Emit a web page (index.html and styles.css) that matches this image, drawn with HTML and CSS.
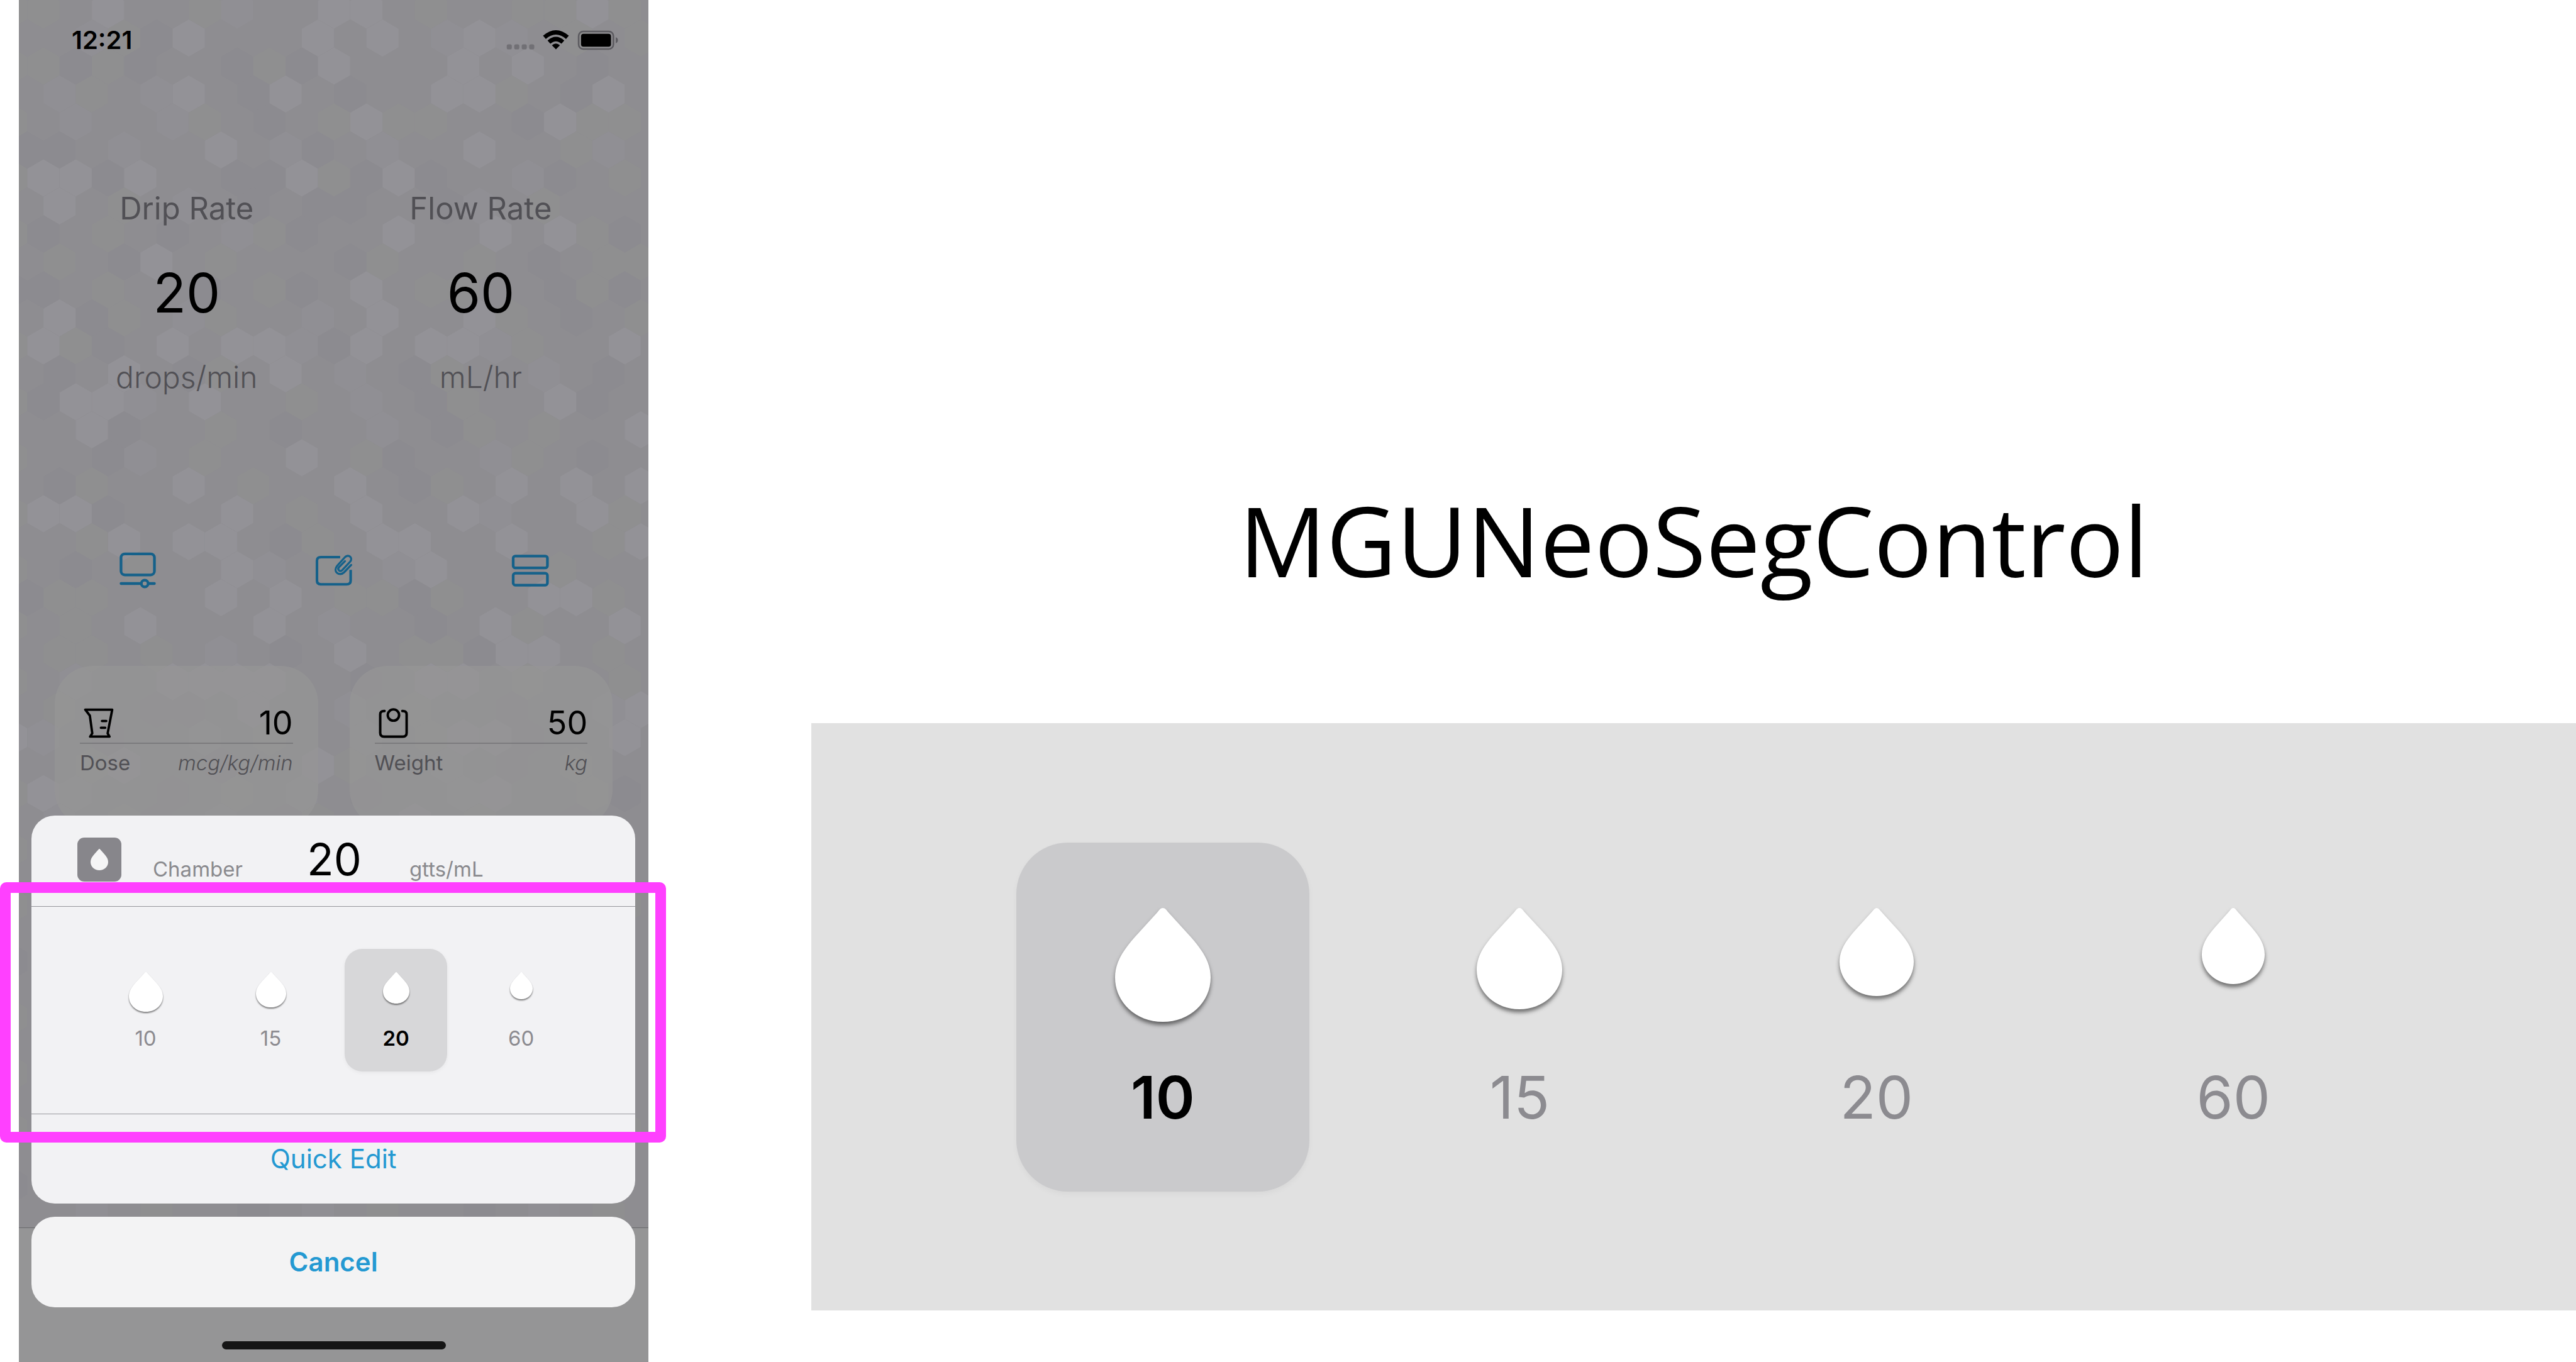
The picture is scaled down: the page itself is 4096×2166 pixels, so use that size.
FILE: index.html
```html
<!DOCTYPE html>
<html lang="en">
<head>
<meta charset="utf-8">
<title>MGUNeoSegControl</title>
<link rel="stylesheet" href="styles.css">
</head>
<body>
<svg class="symbols" aria-hidden="true">
  <symbol id="drop" viewBox="0 0 84 100" preserveAspectRatio="none">
    <path d="M42 0C44 0 45 1.500 47 4L67 26C77 37.500 84 48 84 61C84 83 65.500 100 42 100C18.500 100 0 83 0 61C0 48 7 37.500 17 26L37 4C39 1.500 40 0 42 0Z"/>
  </symbol>
</svg>
<main class="stage">
  <section class="device" aria-label="Infusion calculator">
    <div class="phone">
      <svg class="honeycomb" id="honeycomb" aria-hidden="true"></svg>
      <header class="status">
        <span class="clock">12:21</span>
        <svg class="indicators" viewBox="942 54 210 40" role="img" aria-label="Wi-Fi and battery">
          <g fill="#717075">
            <rect x="942" y="81.500" width="9.500" height="9.500" rx="3"/>
            <rect x="956" y="81.500" width="9.500" height="9.500" rx="3"/>
            <rect x="970" y="81.500" width="9.500" height="9.500" rx="3"/>
            <rect x="984" y="81.500" width="9.500" height="9.500" rx="3"/>
          </g>
          <g fill="none" stroke="#000" stroke-width="8">
            <path d="M1012.500 68.500Q1034 50 1055.500 68.500"/>
            <path d="M1021 77.500Q1034 66 1047 77.500"/>
          </g>
          <path d="M1034 91L1026.500 83.500Q1034 77 1041.500 83.500Z"/>
          <rect x="1076.500" y="57.500" width="65" height="33" rx="8.500" fill="none" stroke="#5c5b60" stroke-width="3"/>
          <rect x="1081" y="62" width="56" height="24" rx="4.500"/>
          <path d="M1146 68.500Q1150 70 1150 74T1146 79.500Z" fill="#5c5b60"/>
        </svg>
      </header>

      <div class="readings">
        <dl class="reading">
          <dt>Drip Rate</dt>
          <dd class="reading-value">20</dd>
          <dd class="reading-unit">drops/min</dd>
        </dl>
        <dl class="reading">
          <dt>Flow Rate</dt>
          <dd class="reading-value">60</dd>
          <dd class="reading-unit">mL/hr</dd>
        </dl>
      </div>

      <nav class="actions">
        <button type="button" aria-label="Display">
          <svg viewBox="0 0 70 70"><g fill="none" stroke="currentColor" stroke-width="5">
            <rect x="4" y="4.500" width="62" height="39" rx="7"/>
            <path d="M4 59.500H41M56 59.500H66" stroke-linecap="round"/>
            <circle cx="48" cy="59.500" r="6.300"/></g></svg>
        </button>
        <button type="button" aria-label="Notes">
          <svg viewBox="0 0 70 70"><g fill="none" stroke="currentColor" stroke-width="4.800">
            <path d="M46.500 10.500H11Q3.500 10.500 3.500 17V54Q3.500 61 11 61H58.500Q66 61 66 54V34"/>
            <path stroke-width="3.800" stroke-linecap="round" d="M67 25L54 38.500C45 47.500 32 37 41 26.500L55.500 10.500C62 4 71 12 65 19L50.500 34.500C46 39 40.500 33.500 44.500 29L55.500 18"/></g></svg>
        </button>
        <button type="button" aria-label="Rows">
          <svg viewBox="0 0 70 70"><g fill="none" stroke="currentColor" stroke-width="5">
            <rect x="3.500" y="8.500" width="63.500" height="22" rx="4"/>
            <rect x="3.500" y="40.500" width="63.500" height="22" rx="4"/></g></svg>
        </button>
      </nav>

      <div class="cards">
        <article class="card">
          <div class="card-main">
            <svg viewBox="0 0 56 56" aria-hidden="true"><g fill="none" stroke="#000" stroke-width="4.400" stroke-linejoin="round" stroke-linecap="round">
              <path d="M3 3H53L44.500 47L48 53H12L16 47L11.500 14Z"/>
              <path d="M34 24H42M32 36.500H40"/></g></svg>
            <span>10</span>
          </div>
          <div class="card-note"><span>Dose</span><em>mcg/kg/min</em></div>
        </article>
        <article class="card">
          <div class="card-main">
            <svg viewBox="0 0 56 56" aria-hidden="true"><g fill="none" stroke="#000" stroke-width="4.600" stroke-linecap="round">
              <path d="M11 5.500Q3 5 3 12V46Q3 53 10 53H45Q52 53 52 46V12Q52 5 44 5.500"/>
              <circle cx="27.500" cy="13" r="10.500"/></g></svg>
            <span>50</span>
          </div>
          <div class="card-note"><span>Weight</span><em>kg</em></div>
        </article>
      </div>
      <div class="toolbar"></div>

      <div class="sheet-stack">
        <div class="sheet">
          <div class="sheet-head">
            <span class="badge"><svg aria-hidden="true"><use href="#drop"/></svg></span>
            <span class="head-label">Chamber</span>
            <span class="head-value">20</span>
            <span class="head-label">gtts/mL</span>
          </div>
          <div class="sheet-picker">
            <fieldset class="segments segments-small" aria-label="Chamber size">
              <label class="segment"><input type="radio" name="chamber"><span class="glyph"><svg class="drop-1"><use href="#drop"/></svg></span><span>10</span></label>
              <label class="segment"><input type="radio" name="chamber"><span class="glyph"><svg class="drop-2"><use href="#drop"/></svg></span><span>15</span></label>
              <label class="segment"><input type="radio" name="chamber" checked><span class="glyph"><svg class="drop-3"><use href="#drop"/></svg></span><span>20</span></label>
              <label class="segment"><input type="radio" name="chamber"><span class="glyph"><svg class="drop-4"><use href="#drop"/></svg></span><span>60</span></label>
            </fieldset>
            <div class="callout"></div>
          </div>
          <button type="button" class="sheet-button">Quick Edit</button>
        </div>
        <button type="button" class="sheet-button cancel">Cancel</button>
      </div>
      <div class="home"></div>
    </div>
  </section>

  <section class="demo">
    <h1>MGUNeoSegControl</h1>
    <div class="panel">
      <fieldset class="segments segments-large" aria-label="Drops per millilitre">
        <label class="segment"><input type="radio" name="demo" checked><span class="glyph"><svg class="drop-1"><use href="#drop"/></svg></span><span>10</span></label>
        <label class="segment"><input type="radio" name="demo"><span class="glyph"><svg class="drop-2"><use href="#drop"/></svg></span><span>15</span></label>
        <label class="segment"><input type="radio" name="demo"><span class="glyph"><svg class="drop-3"><use href="#drop"/></svg></span><span>20</span></label>
        <label class="segment"><input type="radio" name="demo"><span class="glyph"><svg class="drop-4"><use href="#drop"/></svg></span><span>60</span></label>
      </fieldset>
    </div>
  </section>
</main>
<script src="honeycomb.js"></script>
</body>
</html>
```

FILE: styles.css
```css
* { box-sizing: border-box; }

body {
  margin: 0;
  background: #fff;
  color: #000;
  font-family: Inter, "Liberation Sans", sans-serif;
}

button { border: 0; padding: 0; background: none; font: inherit; }
fieldset { border: 0; margin: 0; padding: 0; min-width: 0; }
dl, dd, h1 { margin: 0; }
svg { display: block; }

.symbols { position: absolute; width: 0; height: 0; }

.stage {
  display: grid;
  grid-template-columns: 31.5% 1fr;
  min-height: 100vh;
}

/* Phone */
.device { display: flex; padding: 0 259px 0 30px; }

.phone {
  position: relative;
  flex: 1;
  display: flex;
  flex-direction: column;
  background: #8e8d91;
}

.honeycomb { position: absolute; inset: 0; width: 100%; height: 100%; }

.status {
  position: relative;
  display: flex;
  justify-content: space-between;
  align-items: center;
  height: 128px;
  padding: 0 46px 0 84px;
}
.clock { font-size: 40px; line-height: 48px; font-weight: 600; }
.indicators { width: 180px; height: 34px; }

.readings {
  position: relative;
  display: grid;
  grid-template-columns: 1fr 1fr;
  padding: 174px 33px 0;
  text-align: center;
}
.reading {
  display: flex;
  flex-direction: column;
  gap: 54px;
  font-size: 49px;
  line-height: 60px;
  color: #515055;
}
.reading-value { font-size: 86px; line-height: 100px; color: #000; }
.reading-unit { font-size: 48px; font-weight: 300; }

.actions {
  position: relative;
  display: grid;
  grid-template-columns: repeat(3, 1fr);
  justify-items: center;
  padding: 247px 32px 0 33px;
  color: #15618a;
}
.actions button { color: inherit; }
.actions svg { width: 60px; height: 60px; }

.cards {
  position: relative;
  display: grid;
  grid-template-columns: 1fr 1fr;
  gap: 50px;
  padding: 122px 57px 0;
}
.card {
  height: 257px;
  padding: 60px 40px 0;
  border-radius: 60px;
  background: rgba(150, 150, 150, 0.7);
}
.card-main {
  display: flex;
  justify-content: space-between;
  align-items: center;
  height: 64px;
  border-bottom: 2px solid #7b7a7d;
  font-size: 52px;
  line-height: 60px;
}
.card-main svg { width: 48px; height: 48px; margin-left: 6px; }
.card-note {
  display: flex;
  justify-content: space-between;
  margin-top: 10px;
  font-size: 33px;
  line-height: 40px;
  color: #515055;
}
.card-note em { font-weight: 300; }

.toolbar {
  position: relative;
  height: 214px;
  margin-top: auto;
  border-top: 1px solid #69696c;
  background: #959596;
}

.sheet-stack {
  position: absolute;
  left: 20px;
  right: 21px;
  bottom: 87px;
  display: flex;
  flex-direction: column;
  gap: 21px;
}
.sheet { border-radius: 37px; background: #f2f2f4; }
.sheet-head {
  display: grid;
  grid-template-columns: 70px 195px 113px 1fr;
  column-gap: 50px;
  align-items: end;
  height: 144px;
  padding: 0 0 39px 73px;
}
.badge {
  display: grid;
  place-items: center;
  height: 70px;
  border-radius: 11px;
  background: #87868b;
}
.badge svg { width: 28px; height: 34px; fill: #f5f5f6; }
.head-label { font-size: 33px; line-height: 40px; color: #8a8a8e; }
.head-value { font-size: 70px; line-height: 70px; }

.sheet-picker {
  position: relative;
  padding: 67px 100px;
  border-top: 1px solid #97979b;
  border-bottom: 1px solid #97979b;
}

.callout {
  position: absolute;
  inset: -39px -49px -46px -50px;
  z-index: 1;
  border: 17px solid #ff40ff;
  border-radius: 10px;
  pointer-events: none;
}

.sheet-button {
  display: block;
  width: 100%;
  height: 142px;
  font-size: 42px;
  line-height: 50px;
  color: #2499d2;
}
.cancel { height: 144px; border-radius: 37px; background: #f3f3f4; font-weight: 600; }

.home {
  position: absolute;
  left: 50%;
  bottom: 20px;
  width: 356px;
  height: 13px;
  margin-left: -178px;
  border-radius: 7px;
  background: #151515;
}

/* Segmented control */
.segments { display: grid; grid-template-columns: repeat(4, 1fr); }
.segment {
  position: relative;
  display: flex;
  flex-direction: column;
  align-items: center;
  color: #8c8b90;
}
.segment input { position: absolute; inset: 0; margin: 0; opacity: 0; }
.segment:has(input:checked) { color: #000; font-weight: 600; }
.segment svg { fill: #fff; overflow: visible; }

.segments-small { gap: 36px; }
.segments-small .segment {
  height: 195px;
  padding-top: 37px;
  border-radius: 28px;
  font-size: 33px;
  line-height: 40px;
}
.segments-small .segment:has(input:checked) {
  background: #d7d7d9;
  box-shadow: 0 2px 6px rgba(0, 0, 0, 0.05);
}
.segments-small .glyph { height: 85px; }
.segments-small svg { filter: drop-shadow(0 2px 1px rgba(0, 0, 0, 0.5)); }
.segments-small .drop-1 { width: 54px; height: 63px; }
.segments-small .drop-2 { width: 48px; height: 56px; }
.segments-small .drop-3 { width: 42px; height: 50px; }
.segments-small .drop-4 { width: 36px; height: 43px; }

.segments-large { gap: 102px; }
.segments-large .segment {
  height: 555px;
  padding-top: 104px;
  border-radius: 82px;
  font-size: 94px;
  line-height: 112px;
}
.segments-large .segment:has(input:checked) {
  background: #cacacc;
  box-shadow: 0 4px 10px rgba(0, 0, 0, 0.04);
}
.segments-large .glyph { height: 245px; }
.segments-large svg { filter: drop-shadow(0 5px 3px rgba(0, 0, 0, 0.5)); }
.segments-large .drop-1 { width: 152px; height: 181px; }
.segments-large .drop-2 { width: 136px; height: 161px; }
.segments-large .drop-3 { width: 118px; height: 140px; }
.segments-large .drop-4 { width: 100px; height: 121px; }

/* Demo side */
.demo { display: flex; flex-direction: column; }
.demo h1 {
  padding-top: 748px;
  font-family: "Open Sans", "Noto Sans", sans-serif;
  font-size: 154px;
  line-height: 220px;
  font-weight: 400;
  text-align: center;
}
.panel {
  margin-top: 182px;
  padding: 190px 312px 189px 326px;
  background: #e1e1e1;
}
```

FILE: honeycomb.js
```js
// Tints of the honeycomb backdrop, one string per row, one letter per cell:
// L light, l faint light, g green grey, d dark, . plain
const rows = [
  "gg.L..gl..LL.g..ggLg",
  "..lgdL...L.L.lLl.g.g",
  "ggdgd..dgdL...L.L.d.",
  ".lg.lL.dL.d..LLg.dL.",
  "g.l..lg.d.gLgg..dLgg",
  "dd.l..L.ld.l..L..gl.",
  "gLLdL..ddLgdLd..ld.g",
  ".L.g.l.d.dd..dl.g...",
  "gd.g.d.lgd..L..L.Lgd",
  ".g.dL.g...dg..g.d.gg",
  "dd.g..d.gd.L.gg..dgd",
  ".Ldg.lg..l.L..Lg.d.g",
  "gLgd.L.LLldL.LLlg..L",
  ".d.L.dg.L.l.dg..l.d.",
  "gdLLl.L..g.l.dg..Ld.",
  "..Ld..g.d..l.dg.g..L",
  "g..dl.g..L.gd..lg.d.",
  ".dg..L.g..L.dg.L.L.L",
  "gLLd...L.g.L..Ll..Lg",
  "..gL.LL.dg.LL..L..gL",
  "g.d.g..Ll.g.lL..dg..",
  "dgg...L.L.ggdg..LLg.",
  "g.g.L...L.l..d.Lg..L",
  ".gg.g.l.d.L.ggdLL.g.",
  "g.l..LLLL..d.LL.g..g",
  ".g..dd.L..l.g..d..lL",
  "Ll.d..l.g..l.gLLd..L",
  "..gL..d..Lg..l.d.g..",
  "gLl..d.g.l.d..lL..gd",
  ".l.gd.l.dg..L.g..d..",
  "g.d.L..g..l.gd..L.g.",
  ".g..l.d.L.g..l.g.d..",
  "g.l.d..g..L.d.g..l.g",
  "..g.l.d..g.l.d.g..d.",
  "d.g..l.g.d..l.g..d..",
  "..l.g..d.l.g..d.l.g.",
  "g..d.l.g..d.l.g..d..",
  ".d.g..l.d.g..l.d.g..",
  "g.l..d.g.L.d..l.g.d.",
  ".g..l.d.L.g..l.g.d..",
  "g.l.d..g..L.d.g..l.g",
  "..g.l.d..g.l.d.g..d.",
  "d.g..l.g.d..l.g..d..",
  "..l.g..d.l.g..d.l.g."
];
const tints = { L: "#939297", l: "#908f94", g: "#8f8f90", d: "#8c8b90" };
const svg = document.getElementById("honeycomb");
rows.forEach((row, r) => {
  [...row].forEach((cell, c) => {
    if (!tints[cell]) return;
    const x = -12.3 + c * 51.35 + (r % 2) * 25.67;
    const y = 16 + r * 44.5;
    const hex = document.createElementNS("http://www.w3.org/2000/svg", "path");
    hex.setAttribute("d", `M${x} ${y - 29.5}l25.5 14.7v29.6l-25.5 14.7l-25.5-14.7v-29.6z`);
    hex.setAttribute("fill", tints[cell]);
    svg.append(hex);
  });
});
```
